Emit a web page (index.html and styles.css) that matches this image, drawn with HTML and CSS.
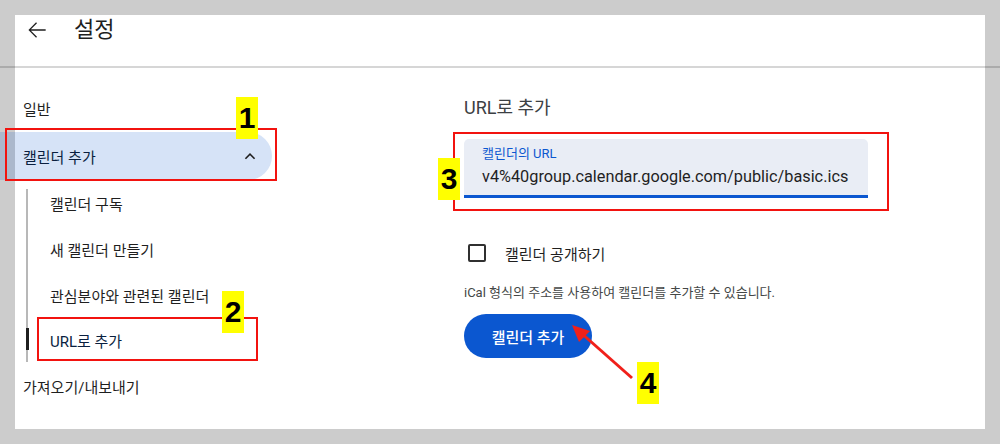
FILE: index.html
```html
<!DOCTYPE html>
<html lang="ko">
<head>
    <meta charset="UTF-8">
    <meta name="viewport" content="width=device-width, initial-scale=1.0">
    <title>설정 - URL로 추가</title>
    <link rel="stylesheet" href="styles.css">
</head>
<body>
    <div class="window">
        <div class="header">
            <button class="back" aria-label="뒤로">
                <svg width="26" height="26" viewBox="0 0 24 24"><path d="M20 11.4H6.4l5.6-5.6-.85-.85L4.1 12l7.05 7.05.85-.85-5.6-5.6H20z" fill="#1f1f1f"/></svg>
            </button>
            <h1>설정</h1>
        </div>

        <div class="main">
            <nav class="nav">
                <div class="nav-item">일반</div>
                <div class="nav-item active">
                    <span>캘린더 추가</span>
                    <svg width="20" height="20" viewBox="0 0 24 24"><path d="M12 8.4l-6.2 6.2 1.4 1.4 4.8-4.8 4.8 4.8 1.4-1.4z" fill="#1f1f1f"/></svg>
                </div>
                <div class="sub">
                    <div class="sub-item">캘린더 구독</div>
                    <div class="sub-item">새 캘린더 만들기</div>
                    <div class="sub-item">관심분야와 관련된 캘린더</div>
                    <div class="sub-item selected">URL로 추가</div>
                </div>
                <div class="nav-item">가져오기/내보내기</div>
            </nav>

            <section class="content">
                <h2>URL로 추가</h2>
                <div class="field">
                    <label>캘린더의 URL</label>
                    <div class="value">v4%40group.calendar.google.com/public/basic.ics</div>
                </div>
                <div class="check-row">
                    <span class="checkbox"></span>
                    <span>캘린더 공개하기</span>
                </div>
                <p class="hint">iCal 형식의 주소를 사용하여 캘린더를 추가할 수 있습니다.</p>
                <button class="primary">캘린더 추가</button>
            </section>
        </div>
    </div>

    <!-- annotations -->
    <div class="mark box-1"></div>
    <div class="mark box-2"></div>
    <div class="mark box-3"></div>
    <div class="num num-1">1</div>
    <div class="num num-2">2</div>
    <div class="num num-3">3</div>
    <div class="num num-4">4</div>
    <svg class="arrow" width="80" height="70" viewBox="0 0 80 70">
        <line x1="68" y1="58" x2="16" y2="12" stroke="#f0201a" stroke-width="3"/>
        <polygon points="8,5 26,11 15,22" fill="#f0201a"/>
    </svg>
</body>
</html>
```

FILE: styles.css
```css
body {
    margin: 0;
    background: #cccccc;
    font-family: Roboto, "Noto Sans CJK KR", sans-serif;
    color: #1f1f1f;
    overflow: hidden;
}
.window {
    margin: 15px;
    height: 414px;
    background: white;
    position: relative;
}
.header {
    height: 52px;
    box-sizing: border-box;
    padding-bottom: 22px;
    padding-left: 9px;
    display: flex;
    align-items: center;
    position: relative;
}
.header::after {
    content: "";
    position: absolute;
    left: -15px;
    right: -15px;
    bottom: -1px;
    height: 2px;
    background: rgba(0,0,0,0.16);
}
.back {
    border: none;
    background: none;
    padding: 0;
    width: 26px;
    height: 26px;
    display: flex;
}
.header h1 {
    margin: 0 0 0 24px;
    font-size: 22px;
    font-weight: 400;
    line-height: 30px;
}
.main {
    display: flex;
    padding-top: 17px;
}
.nav {
    width: 257px;
    font-size: 15px;
}
.nav-item {
    height: 48px;
    display: flex;
    align-items: center;
    padding-left: 8px;
}
.nav-item.active {
    margin-left: -15px;
    padding-left: 23px;
    padding-right: 12px;
    justify-content: space-between;
    background: rgba(11,87,208,0.17);
    border-radius: 0 24px 24px 0;
    color: #0a1f3f;
}
/* guide line of the sub menu, starts a little below the open item */
.sub {
    margin-left: 11px;
    border-left: 2px solid #b8b8b8;
    position: relative;
}
.sub::before {
    content: "";
    position: absolute;
    left: -2px;
    top: 0;
    width: 2px;
    height: 9px;
    background: white;
}
.sub-item {
    height: 46px;
    display: flex;
    align-items: center;
    padding-left: 22px;
    position: relative;
}
.sub-item.selected {
    color: #0a1f3f;
}
.sub-item.selected::before {
    content: "";
    position: absolute;
    left: -2px;
    top: 10px;
    bottom: 12px;
    width: 3px;
    background: #1f1f1f;
}
.sub-item:last-child {
    height: 44px;
}
.content {
    margin-left: 192px;
    width: 404px;
}
.content h2 {
    margin: 12px 0 19px;
    font-size: 18px;
    font-weight: 400;
    line-height: 24px;
    color: #3c4043;
}
.field {
    background: #e9edf5;
    border-radius: 5px 5px 0 0;
    border-bottom: 3px solid #0b57d0;
    padding: 7px 0 0 18px;
    box-sizing: border-box;
    height: 59px;
}
.field label {
    display: block;
    font-size: 13px;
    line-height: 16px;
    color: #0b57d0;
}
.value {
    font-size: 16.3px;
    line-height: 24px;
    color: #1f1f1f;
    margin-top: 3px;
}
.check-row {
    display: flex;
    align-items: center;
    gap: 19px;
    height: 40px;
    margin-top: 35px;
    padding-left: 4px;
    font-size: 15px;
}
.checkbox {
    width: 14px;
    height: 14px;
    border: 2px solid #303030;
    border-radius: 2px;
}
.hint {
    margin: 12px 0 0;
    font-size: 13px;
    line-height: 16px;
    color: #444746;
}
.primary {
    margin-top: 13px;
    width: 128px;
    height: 44px;
    border: none;
    border-radius: 22px;
    background: #0b57d0;
    color: white;
    font-family: inherit;
    font-size: 15px;
    font-weight: 500;
}
.mark {
    position: absolute;
    border: 2px solid #f2130f;
    box-sizing: border-box;
}
.box-1 { left: 5px; top: 128px; width: 272px; height: 53px; }
.box-2 { left: 37px; top: 317px; width: 221px; height: 44px; }
.box-3 { left: 453px; top: 132px; width: 436px; height: 79px; }
.num {
    position: absolute;
    width: 22px;
    height: 42px;
    background: #ffff00;
    font-family: "Liberation Sans", Arial, sans-serif;
    font-weight: bold;
    font-size: 30px;
    line-height: 42px;
    text-align: center;
    color: black;
}
.num-1 { left: 236px; top: 97px; }
.num-2 { left: 222px; top: 291px; }
.num-3 { left: 438px; top: 158px; }
.num-4 { left: 637px; top: 362px; }
.arrow {
    position: absolute;
    left: 564px;
    top: 320px;
}
```
